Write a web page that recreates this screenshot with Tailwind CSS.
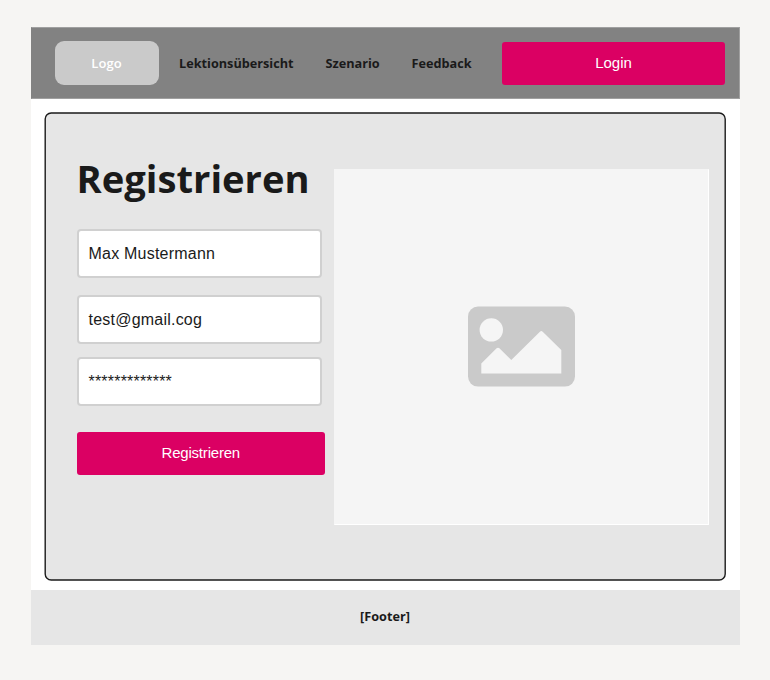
<!DOCTYPE html>
<html lang="de">
<head>
<meta charset="utf-8">
<title>Registrieren</title>
<script src="https://cdn.jsdelivr.net/npm/@tailwindcss/browser@4"></script>
</head>
<body class="h-[680px] overflow-hidden bg-[#f6f5f3] pt-[27px] pl-[31px] font-['Open_Sans',sans-serif] text-[#1a1a1a]">
<div class="flex h-[618px] w-[709px] flex-col bg-white">
  <header class="flex h-[72px] shrink-0 items-start border border-[#a0a0a0] border-l-[#828282] bg-[#828282] pt-[13px] pl-[23px]">
    <div class="flex h-[44px] w-[104px] items-center justify-center rounded-[9px] bg-[#cacaca] pr-[1px] text-[13px] leading-[18px] font-semibold tracking-[0.1px] text-white">Logo</div>
    <nav class="flex h-[44px] items-center pl-[20px] text-[12.7px] leading-[18px] font-bold">
      <a class="w-[146.5px]">Lektionsübersicht</a>
      <a class="w-[86px]">Szenario</a>
      <a class="w-[90.5px]">Feedback</a>
    </nav>
    <button class="mt-px h-[43px] w-[223px] rounded-[3px] bg-[#db0063] pb-[2px] font-['Liberation_Sans',sans-serif] text-[15px] leading-[18px] text-white">Login</button>
  </header>
  <main class="relative mt-[13px] ml-[13px] flex h-[469px] w-[682px] shrink-0">
    <svg class="absolute inset-0" width="682" height="469" viewBox="0 0 682 469"><rect x="1.2" y="1" width="680" height="467" rx="6" fill="#e6e6e6" stroke="#1a1a1a" stroke-width="1.4"/></svg>
    <form class="relative w-[290px] pl-[32.5px]">
      <h1 class="mt-[39px] h-[54px] text-[38.2px] leading-[54px] font-bold whitespace-nowrap">Registrieren</h1>
      <div class="mt-[24px] flex h-[49px] w-[245.4px] items-center rounded-[4px] border-2 border-[#d0d0d0] bg-white pl-[10px] font-['Liberation_Sans',sans-serif] text-[16px] leading-[18px] tracking-[0.22px]">Max Mustermann</div>
      <div class="mt-[17px] flex h-[49px] w-[245.4px] items-center rounded-[4px] border-2 border-[#d0d0d0] bg-white pl-[10px] font-['Liberation_Sans',sans-serif] text-[16px] leading-[18px] tracking-[0.22px]">test@gmail.cog</div>
      <div class="mt-[13px] flex h-[49px] w-[245.4px] items-center rounded-[4px] border-2 border-[#d0d0d0] bg-white pl-[10px] font-['Liberation_Sans',sans-serif] text-[16px] leading-[18px] tracking-[0.2px]">*************</div>
      <button type="button" class="mt-[26px] block h-[43px] w-[248.5px] rounded-[3px] bg-[#db0063] pb-[2px] font-['Liberation_Sans',sans-serif] text-[15px] leading-[18px] tracking-[-0.2px] text-white">Registrieren</button>
    </form>
    <div class="relative mt-[57px] flex h-[356px] w-[375px] items-center justify-center border border-t-[#f5f5f5] border-r-white border-b-white border-l-[#f5f5f5] bg-[#f5f5f5]">
      <svg class="-mt-[2px]" width="107" height="81" viewBox="0 -0.6 107 81"><rect width="107" height="80" rx="10" fill="#cacaca"/><g fill="#f5f5f5"><circle cx="23.3" cy="23.3" r="11.7"/><path d="M13.3 67V57L28.6 41.7Q30 40.5 31.4 41.7L43.3 53.5L71.9 25.1Q73.3 23.8 74.7 25.1L93.3 43.5V67Z"/></g></svg>
    </div>
  </main>
  <footer class="mt-[9px] flex h-[55px] shrink-0 items-center justify-center bg-[#e6e6e6] pr-[1px] pb-[3px] text-[12.7px] leading-[18px] font-bold">[Footer]</footer>
</div>
</body>
</html>
